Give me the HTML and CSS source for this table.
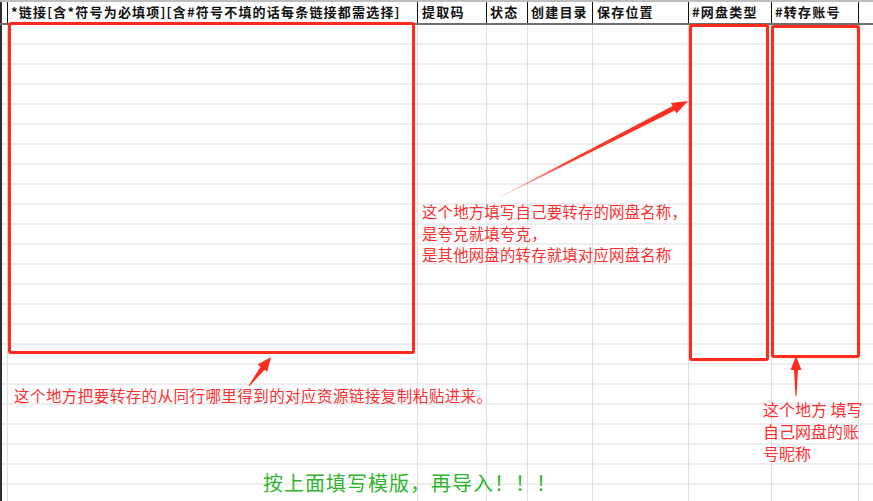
FILE: index.html
```html
<!DOCTYPE html>
<html lang="zh-CN">
<head>
<meta charset="utf-8">
<title>导入模版</title>
<link rel="stylesheet" href="styles.css">
</head>
<body>
<div class="sheet">
  <div class="row head">
    <div class="gutter"></div>
    <div class="cell c1">*链接[含*符号为必填项][含#符号不填的话每条链接都需选择]</div>
    <div class="cell c2">提取码</div>
    <div class="cell c3">状态</div>
    <div class="cell c4">创建目录</div>
    <div class="cell c5">保存位置</div>
    <div class="cell c6">#网盘类型</div>
    <div class="cell c7">#转存账号</div>
    <div class="cell rest"></div>
  </div>
  <div class="row body">
    <div class="gutter"></div>
    <div class="cell c1"></div>
    <div class="cell c2"></div>
    <div class="cell c3"></div>
    <div class="cell c4"></div>
    <div class="cell c5"></div>
    <div class="cell c6"></div>
    <div class="cell c7"></div>
    <div class="cell rest"></div>
  </div>

  <div class="box box-link"></div>
  <div class="box box-type"></div>
  <div class="box box-account"></div>

  <svg class="arrows" width="873" height="501" viewBox="0 0 873 501">
    <defs>
      <linearGradient id="fade" gradientUnits="userSpaceOnUse" x1="500" y1="197" x2="688" y2="101">
        <stop offset="0" stop-color="#ff2b1c" stop-opacity="0.15"/>
        <stop offset="0.35" stop-color="#ff2b1c" stop-opacity="0.9"/>
        <stop offset="1" stop-color="#ff2b1c"/>
      </linearGradient>
    </defs>
    <polygon fill="#ff2b1c" points="248.6,385.7 260.5,366.7 257.7,364.6 271,357 267.3,371.8 264.5,369.7 249.4,386.3"/>
    <polygon fill="url(#fade)" points="499.9,196.7 672.6,106.1 671,102.9 688,101 676.5,113.6 674.9,110.5 500.1,197.3"/>
    <polygon fill="#ff2b1c" points="795.5,396 794,370 790.5,370 796,356 801.5,370 798,370 796.5,396"/>
  </svg>

  <p class="note note-link">这个地方把要转存的从同行哪里得到的对应资源链接复制粘贴进来。</p>
  <p class="note note-type">这个地方填写自己要转存的网盘名称，<br>是夸克就填夸克，<br>是其他网盘的转存就填对应网盘名称</p>
  <p class="note note-account">这个地方 填写<br>自己网盘的账<br>号昵称</p>
  <p class="tip">按上面填写模版，再导入！！！</p>
</div>
</body>
</html>
```

FILE: styles.css
```css
* { box-sizing: border-box; }
html, body { margin: 0; padding: 0; background: #fff; }
body { width: 873px; height: 501px; overflow: hidden; font-family: "Noto Sans CJK SC", "Noto Sans", sans-serif; }

.sheet { position: relative; width: 873px; height: 501px; display: flex; flex-direction: column; }

.row { display: flex; }
.head { height: 25px; border-top: 2px solid #bdbdbd; border-bottom: 2px solid #6e6e6e; }
.body { flex: 1; background: repeating-linear-gradient(to bottom, transparent 0, transparent 18px, #eeeeee 18px, #eeeeee 20px); }

.gutter { width: 7px; flex: none; border-left: 2px solid #2e2e2e; }
.cell { flex: none; border-left: 1px solid #dedede; }
.head .cell { border-left-color: #111; font-size: 13px; font-weight: bold; letter-spacing: 1.2px; line-height: 20px; color: #111; padding-left: 3px; white-space: nowrap; overflow: hidden; }
.c1 { width: 410px; }
.c2 { width: 69px; }
.head .c2 { padding-left: 4px; }
.c3 { width: 41px; }
.c4 { width: 65px; }
.c5 { width: 96px; }
.head .c5 { padding-left: 4px; }
.c6 { width: 83px; }
.c7 { width: 87px; }
.rest { flex: 1; }
.head .rest { border-left-color: #111; }

.box { position: absolute; border: 3px solid #ff2b1c; border-radius: 3px; box-shadow: 0 0 1px rgba(255, 60, 40, 0.6); }
.box-link { left: 8px; top: 22px; width: 407px; height: 332px; }
.box-type { left: 689px; top: 24px; width: 80px; height: 337px; }
.box-account { left: 771px; top: 25px; width: 89px; height: 333px; }

.arrows { position: absolute; left: 0; top: 0; pointer-events: none; }

.note { position: absolute; margin: 0; color: #ff2d2d; white-space: nowrap; }
.note-link { left: 14px; top: 385px; font-size: 15.5px; line-height: 20px; letter-spacing: 0.45px; }
.note-type { left: 422px; top: 201px; font-size: 15.4px; line-height: 21.5px; letter-spacing: 0.2px; }
.note-account { left: 763px; top: 398px; font-size: 16px; line-height: 22px; }

.tip { position: absolute; margin: 0; left: 263px; top: 470px; font-size: 20px; line-height: 26px; letter-spacing: 1px; color: #2eb52e; white-space: nowrap; }
```
